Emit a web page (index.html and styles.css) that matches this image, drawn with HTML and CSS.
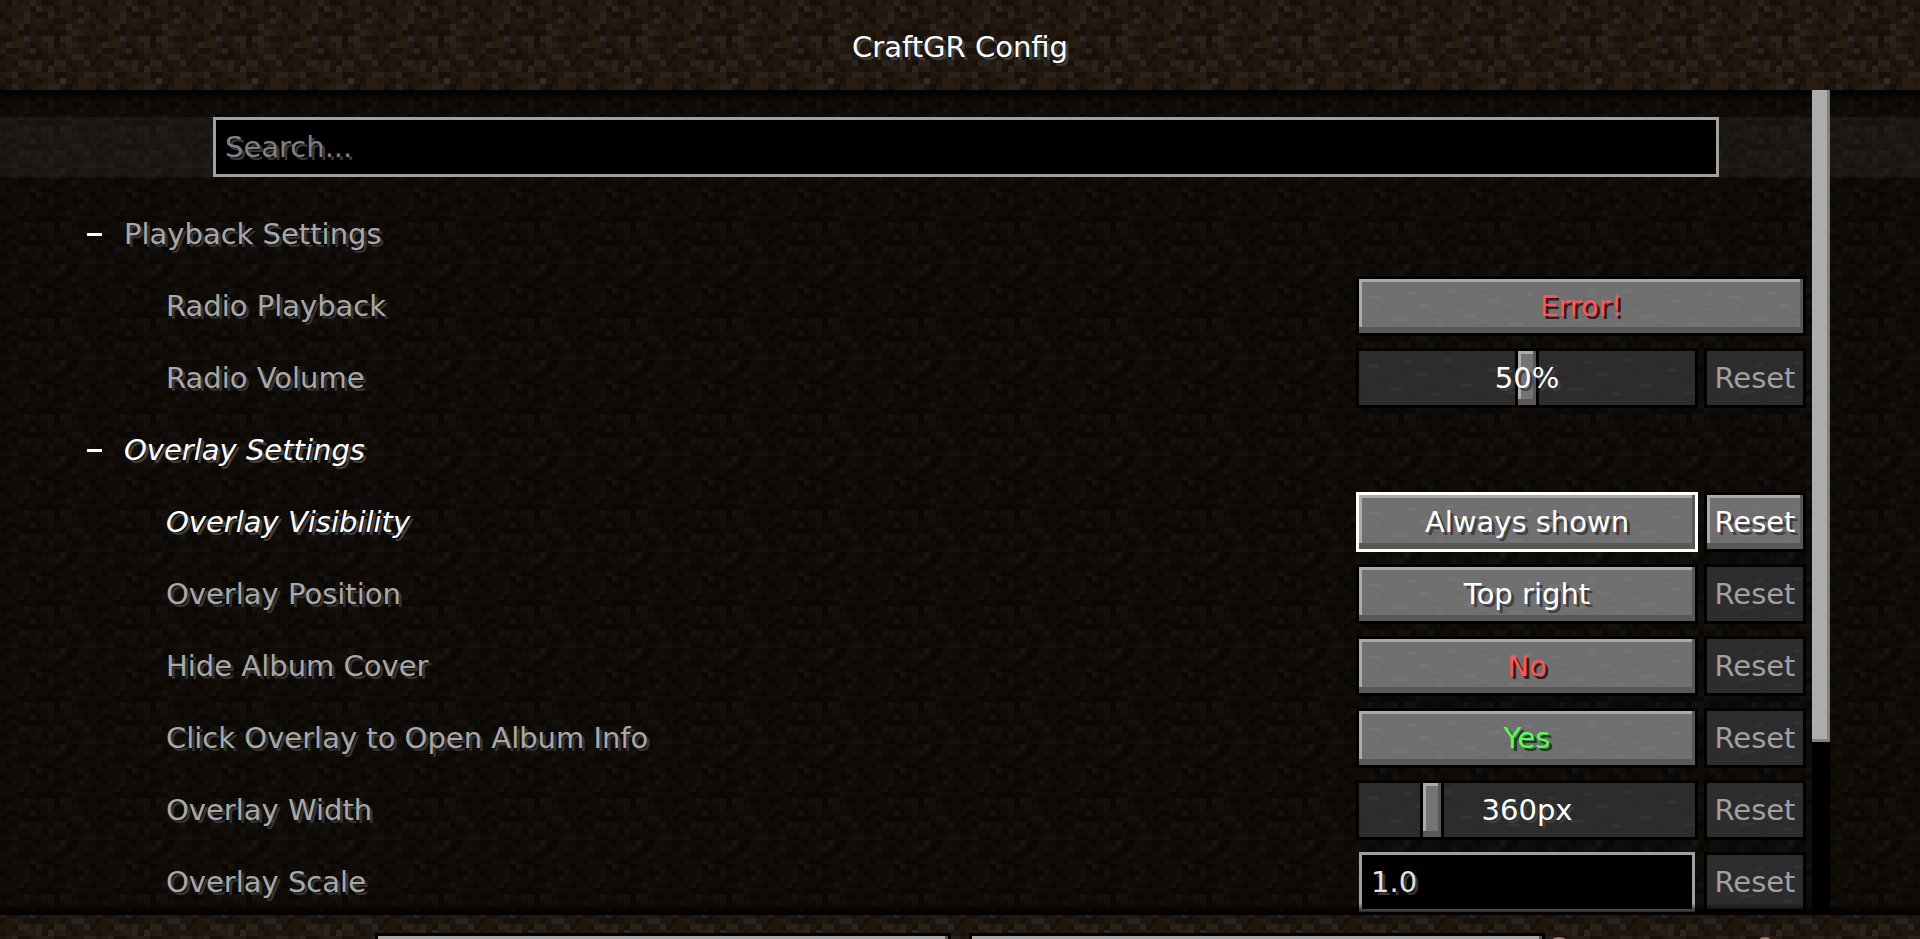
FILE: index.html
```html
<!DOCTYPE html>
<html lang="en">
<head>
    <meta charset="UTF-8">
    <meta name="viewport" content="width=device-width, initial-scale=1.0">
    <title>CraftGR Config</title>
    <link rel="stylesheet" href="styles.css">
</head>
<body>
    <header>
        <h1>CraftGR Config</h1>
    </header>
    <main id="list">
        <div id="search-row">
            <input type="text" id="search" class="field" placeholder="Search..." aria-label="Search">
        </div>
        <section>
            <h2 class="row category"><span class="dash"></span>Playback Settings</h2>
            <div class="row">
                <label for="playback">Radio Playback</label>
                <div class="controls">
                    <button id="playback" class="btn wide red">Error!</button>
                </div>
            </div>
            <div class="row">
                <label for="volume">Radio Volume</label>
                <div class="controls">
                    <div class="slider">
                        <input type="range" id="volume" min="0" max="100" value="50">
                        <output for="volume">50%</output>
                    </div>
                    <button class="btn reset" disabled>Reset</button>
                </div>
            </div>
        </section>
        <section>
            <h2 class="row category edited"><span class="dash"></span>Overlay Settings</h2>
            <div class="row edited">
                <label for="visibility">Overlay Visibility</label>
                <div class="controls">
                    <button id="visibility" class="btn option selected">Always shown</button>
                    <button class="btn reset">Reset</button>
                </div>
            </div>
            <div class="row">
                <label for="position">Overlay Position</label>
                <div class="controls">
                    <button id="position" class="btn option">Top right</button>
                    <button class="btn reset" disabled>Reset</button>
                </div>
            </div>
            <div class="row">
                <label for="hide-cover">Hide Album Cover</label>
                <div class="controls">
                    <button id="hide-cover" class="btn option red">No</button>
                    <button class="btn reset" disabled>Reset</button>
                </div>
            </div>
            <div class="row">
                <label for="open-info">Click Overlay to Open Album Info</label>
                <div class="controls">
                    <button id="open-info" class="btn option green">Yes</button>
                    <button class="btn reset" disabled>Reset</button>
                </div>
            </div>
            <div class="row">
                <label for="width">Overlay Width</label>
                <div class="controls">
                    <div class="slider">
                        <input type="range" id="width" min="200" max="1000" value="360">
                        <output for="width">360px</output>
                    </div>
                    <button class="btn reset" disabled>Reset</button>
                </div>
            </div>
            <div class="row">
                <label for="scale">Overlay Scale</label>
                <div class="controls">
                    <input type="text" id="scale" class="field" value="1.0">
                    <button class="btn reset" disabled>Reset</button>
                </div>
            </div>
        </section>
        <div id="scrollbar"><div id="scroll-thumb"></div></div>
    </main>
    <footer>
        <button class="btn action" aria-label="Cancel"></button>
        <button class="btn action" aria-label="Save and quit"></button>
        <svg id="footer-art" width="220" height="2" viewBox="0 0 220 2" aria-hidden="true">
            <ellipse cx="6" cy="2" rx="6" ry="2" fill="#8f7c68"/>
            <ellipse cx="212" cy="2" rx="5" ry="2" fill="#8f7c68"/>
        </svg>
    </footer>
    <script>
        function bindSlider(id, unit) {
            const input = document.getElementById(id);
            const output = input.nextElementSibling;
            input.addEventListener('input', function() {
                output.textContent = input.value + unit;
            });
        }

        bindSlider('volume', '%');
        bindSlider('width', 'px');
    </script>
</body>
</html>
```
FILE: styles.css
```css
:root {
    /* 16x16 dirt block, drawn at 6px per texel */
    --dirt: url("data:image/svg+xml,%3Csvg xmlns='http://www.w3.org/2000/svg' width='96' height='96' viewBox='0 -.5 16 16' shape-rendering='crispEdges'%3E%3Cpath fill='%2320170f' d='M0-.5h16v16H0z'/%3E%3Cpath stroke='%2319100a' d='M1 0h1M7 0h2M12 0h1M5 1h1M9 1h1M15 1h1M0 2h1M6 2h2M12 2h2M1 3h1M9 3h2M4 4h1M8 4h1M15 4h1M3 5h2M6 5h5M0 6h2M9 6h1M13 6h2M5 7h1M9 7h1M1 8h2M6 8h1M14 8h1M0 9h1M4 9h4M10 9h1M2 10h1M8 10h1M11 10h1M15 10h1M0 11h1M7 11h1M12 11h1M3 12h2M9 12h2M1 13h1M6 13h1M12 13h1M0 14h1M4 14h1M11 14h1M3 15h3M9 15h2M14 15h1'/%3E%3Cpath stroke='%23281b12' d='M2 0h1M10 0h2M3 1h2M8 1h1M10 2h1M2 3h2M6 3h1M0 4h1M2 5h1M13 5h1M3 6h1M2 7h2M12 7h1M0 8h1M8 8h1M11 8h1M2 9h1M4 11h2M10 11h1M1 12h1M6 12h3M3 13h1M8 13h1M13 13h2M6 14h2M13 14h3M0 15h2M8 15h1'/%3E%3Cpath stroke='%232a221d' d='M5 0h1M13 1h1M4 2h1M8 2h1M14 2h1M4 3h1M13 3h1M3 4h1M12 5h1M7 6h2M10 6h2M1 7h1M8 7h1M11 7h1M5 8h1M12 9h2M3 10h2M6 10h1M9 10h2M6 11h1M2 12h1M14 12h2M2 14h1M8 14h2M12 15h1'/%3E%3Cpath stroke='%23252728' d='M6 1h1M11 4h1M4 6h1M14 10h1M8 11h1'/%3E%3Cpath stroke='%23382c23' d='M10 13h1'/%3E%3C/svg%3E");
    /* scratches on the stone buttons */
    --stone: url("data:image/svg+xml,%3Csvg xmlns='http://www.w3.org/2000/svg' width='180' height='60' fill='none' stroke-width='3' stroke-linecap='round'%3E%3Cg stroke='%23fff' stroke-opacity='.04'%3E%3Cpath d='M12 18h9M34 41h12M62 27l8-1M88 12h6M104 38l11-1M132 22h8M151 45h12M168 15h4M50 14h5M78 46h6'/%3E%3C/g%3E%3Cg stroke='%23000' stroke-opacity='.04'%3E%3Cpath d='M22 29l8 1M44 20h6M8 44h5M70 37h10M96 25l7 1M120 46h6M124 13h8M146 33l9 1M166 28h6M56 49h4'/%3E%3C/g%3E%3C/svg%3E");
}
* {
    box-sizing: border-box;
}
body {
    margin: 0;
    height: 100vh;
    display: flex;
    flex-direction: column;
    overflow: hidden;
    background: #20170f var(--dirt);
    color: #fff;
    font-family: 'DejaVu Sans', sans-serif;
    font-size: 29px;
    line-height: 36px;
}
header {
    flex: 0 0 90px;
    display: flex;
    align-items: center;
    justify-content: center;
    padding-top: 4px;
}
h1, h2 {
    margin: 0;
    font-size: inherit;
    font-weight: normal;
}
h1 {
    text-shadow: 3px 3px 0 #3e3e3e;
}
#list {
    position: relative;
    flex: 1;
    min-height: 0;
    overflow: hidden;
    padding-top: 27px;
    background: linear-gradient(rgba(0, 0, 0, 0.54), rgba(0, 0, 0, 0.54)), var(--dirt);
}
/* shadows where the list slides under the header and footer */
#list::after {
    content: "";
    position: absolute;
    inset: 0;
    pointer-events: none;
    background:
        linear-gradient(#000, transparent) top / 100% 12px no-repeat,
        linear-gradient(transparent, #000) bottom / 100% 12px no-repeat;
}
#search-row {
    margin-bottom: 27px;
    padding: 0 201px 0 213px;
    background-color: rgba(255, 255, 255, 0.05);
}
.field {
    display: block;
    height: 60px;
    padding: 0 9px;
    border: 3px solid #a0a0a0;
    border-radius: 0;
    outline: none;
    background-color: #000;
    color: #e0e0e0;
    font: inherit;
    text-shadow: 3px 3px 0 #383838;
}
.field::placeholder {
    color: #808080;
    opacity: 1;
}
#search {
    width: 100%;
}
#scale {
    width: 336px;
    margin: 0 3px;
}
.row {
    display: flex;
    align-items: center;
    justify-content: space-between;
    height: 60px;
    margin-bottom: 12px;
    padding: 0 114px 0 166px;
    color: #a8a8a8;
    text-shadow: 3px 3px 0 #333;
}
.category {
    justify-content: flex-start;
    gap: 22px;
    padding-left: 87px;
}
.edited {
    color: #fff;
    text-shadow: 3px 3px 0 #3e3e3e;
}
.edited label, .category.edited {
    font-style: italic;
}
.dash {
    width: 15px;
    height: 3px;
    background-color: #fff;
}
.controls {
    display: flex;
    gap: 6px;
    width: 450px;
}
.btn {
    height: 60px;
    padding: 0;
    border: 3px solid #000;
    border-radius: 0;
    background: #707070 var(--stone);
    box-shadow: inset -3px -6px 0 #585858, inset 3px 3px 0 #aaa;
    color: #fff;
    font: inherit;
    text-align: center;
    text-shadow: 3px 3px 0 #3e3e3e;
    cursor: pointer;
}
.btn:hover, .selected {
    border-color: #fff;
}
.wide {
    width: 100%;
}
.option {
    width: 342px;
}
.reset {
    width: 102px;
}
.btn:disabled {
    border-color: #000;
    background-color: #2c2c2c;
    box-shadow: none;
    color: #a0a0a0;
    text-shadow: none;
    cursor: default;
}
.red {
    color: #f55;
    text-shadow: 3px 3px 0 #3f1515;
}
.green {
    color: #5f5;
    text-shadow: 3px 3px 0 #153f15;
}
.slider {
    position: relative;
    width: 342px;
    height: 60px;
}
.slider input {
    -webkit-appearance: none;
    appearance: none;
    display: block;
    width: 100%;
    height: 60px;
    margin: 0;
    background: #2c2c2c var(--stone);
    box-shadow: inset 0 0 0 3px #000;
}
.slider input::-webkit-slider-thumb {
    -webkit-appearance: none;
    width: 24px;
    height: 60px;
    border: 3px solid #000;
    background-color: #747474;
    box-shadow: inset -3px -6px 0 #585858, inset 3px 3px 0 #aaa;
}
.slider output {
    position: absolute;
    inset: 0;
    color: #fff;
    line-height: 60px;
    text-align: center;
    text-shadow: 3px 3px 0 #3e3e3e;
    pointer-events: none;
}
#scrollbar {
    position: absolute;
    z-index: 1;
    top: 0;
    right: 90px;
    bottom: 0;
    width: 18px;
    background-color: #000;
}
#scroll-thumb {
    height: 79%;
    background-color: #acacac;
    box-shadow: inset -3px -3px 0 #808080;
}
footer {
    position: relative;
    flex: 0 0 24px;
    display: flex;
    align-items: flex-start;
    justify-content: center;
    gap: 18px;
    padding-top: 18px;
    overflow: hidden;
}
.action {
    flex: 0 1 576px;
}
#footer-art {
    position: absolute;
    right: 147px;
    bottom: 0;
}
```
